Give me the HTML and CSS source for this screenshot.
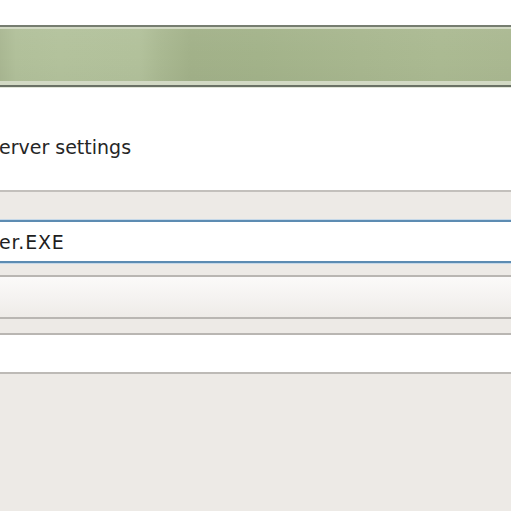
FILE: index.html
```html
<!DOCTYPE html>
<html>
<head>
<meta charset="utf-8">
<link rel="stylesheet" href="styles.css">
</head>
<body>
<div class="window">
  <div class="top-space"></div>
  <div class="banner">
    <div class="banner-fill"></div>
  </div>
  <div class="header">
    <p class="title">erver settings</p>
  </div>
  <div class="panel">
    <div class="strip strip-top"></div>
    <div class="input">
      <span class="input-text">er.EXE</span>
    </div>
    <div class="strip strip-mid"></div>
    <div class="button"></div>
    <div class="strip strip-low"></div>
    <div class="field"></div>
    <div class="panel-rest"></div>
  </div>
</div>
</body>
</html>
```
FILE: styles.css
```css
html, body {
  margin: 0;
  padding: 0;
  background: #edeae6;
}
.window {
  width: 511px;
  height: 511px;
  overflow: hidden;
  display: flex;
  flex-direction: column;
  font-family: "DejaVu Sans", Verdana, sans-serif;
}
.top-space {
  height: 25px;
  background: #ffffff;
  flex: none;
}
.banner {
  flex: none;
  height: 55px;
  border-top: 2px solid #767d70;
  border-bottom: 2px solid #6a7165;
  background: #d2d9c4;
  padding: 2px 0 1px;
  box-sizing: content-box;
}
.banner-fill {
  height: 52px;
  background:
    linear-gradient(180deg, rgba(255,255,255,0.04) 0%, rgba(0,0,0,0) 50%, rgba(0,0,0,0.02) 100%),
    linear-gradient(90deg, #a9b792 0px, #b1c09a 16px, #b3c29c 60px, #b2c19b 140px, #aab992 160px, #a2b189 190px, #a3b38a 260px, #a8b78f 360px, #abba92 440px, #aab891 511px);
}
.header {
  flex: none;
  height: 105px;
  background: #ffffff;
  border-top: 1px solid #e2e6da;
  border-bottom: 2px solid #c3c0bc;
  box-sizing: border-box;
  padding-top: 48px;
}
.title {
  margin: 0;
  font-size: 19px;
  line-height: 22px;
  color: #262626;
  margin-left: -1px;
}
.panel {
  flex: 1;
  display: flex;
  flex-direction: column;
  background: #edeae6;
}
.strip-top {
  height: 28px;
}
.input {
  flex: none;
  height: 39px;
  background: #ffffff;
  border-top: 2px solid #5d8cb2;
  border-bottom: 2px solid #5d8cb2;
  box-shadow: 0 -1px 0 #c5d8e8, 0 1px 0 #c5d8e8;
  display: flex;
  align-items: center;
}
.input-text {
  font-size: 19px;
  letter-spacing: 0.8px;
  color: #1e1e1e;
  margin-left: -1px;
  padding-top: 1px;
}
.strip-mid {
  height: 12px;
  border-bottom: 2px solid #b9b6b2;
}
.button {
  flex: none;
  height: 40px;
  background: linear-gradient(180deg, #fbfaf9 0%, #f5f3f1 50%, #eeebe7 100%);
  border-bottom: 2px solid #b9b6b2;
}
.strip-low {
  height: 14px;
  border-bottom: 2px solid #b9b6b2;
}
.field {
  flex: none;
  height: 37px;
  background: #ffffff;
  border-bottom: 2px solid #bdbab6;
}
.panel-rest {
  flex: 1;
  background: #edeae6;
}
```
